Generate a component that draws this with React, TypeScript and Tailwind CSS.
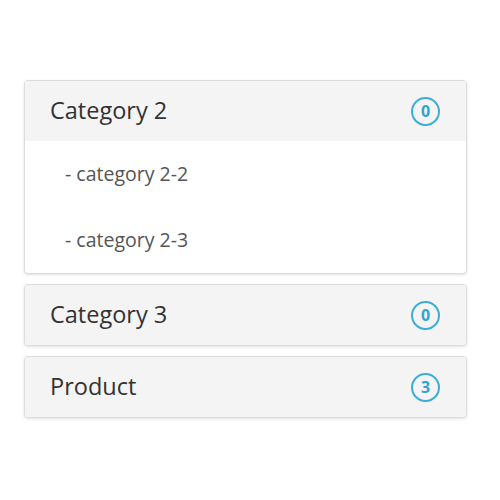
const groups = [
  { name: 'Category 2', count: 0, open: true, items: ['category 2-2', 'category 2-3'] },
  { name: 'Category 3', count: 0, open: false, items: [] as string[] },
  { name: 'Product', count: 3, open: false, items: [] as string[] },
]

function Badge({ n }: { n: number }) {
  return (
    <span className="flex h-[29px] w-[29px] items-center justify-center rounded-full border-2 border-[#3aaed8] text-[16px] font-bold leading-none text-[#2fa4d0]">
      {n}
    </span>
  )
}

export default function App() {
  return (
    <div
      className="h-[500px] w-[500px] bg-white px-[24px] pt-[80px]"
      style={{ fontFamily: '"Open Sans", "Noto Sans", sans-serif' }}
    >
      <div className="flex w-[443px] flex-col gap-[10px]">
        {groups.map((g) => (
          <div
            key={g.name}
            className="overflow-hidden rounded-[4px] border border-[#dcdcdc] bg-white shadow-[0_1px_3px_rgba(0,0,0,0.12)]"
          >
            {/* Header */}
            <div className="flex h-[60px] items-center justify-between bg-[#f4f4f4] pl-[25px] pr-[26px]">
              <span className="text-[23.5px] text-[#333333]">{g.name}</span>
              <Badge n={g.count} />
            </div>
            {g.open && (
              <div className="flex flex-col">
                {g.items.map((it) => (
                  <div key={it} className="flex h-[66px] items-center pl-[40px] text-[19.5px] text-[#555555]">
                    - {it}
                  </div>
                ))}
              </div>
            )}
          </div>
        ))}
      </div>
    </div>
  )
}
